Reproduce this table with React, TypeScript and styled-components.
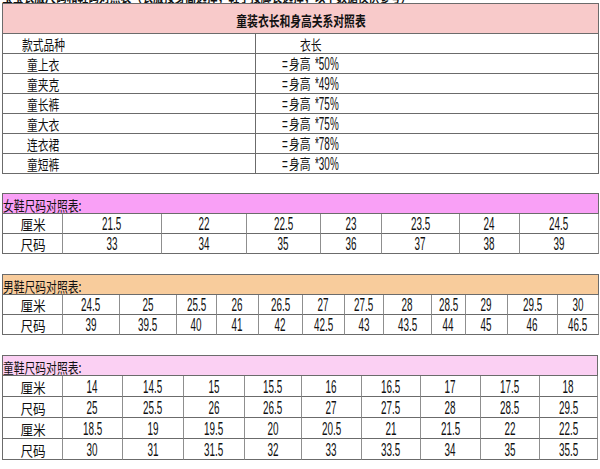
import { Fragment } from "react";
import styled, { createGlobalStyle } from "styled-components";

const GlobalStyle = createGlobalStyle`
  *, *::before, *::after { box-sizing: border-box; }
  html, body { margin: 0; padding: 0; background: #ffffff; }
  body {
    font-family: "Liberation Sans", "Noto Sans CJK SC", sans-serif;
    color: #111111;
  }
`;

const Page = styled.div`
  width: 600px;
  padding-left: 2px;
`;

// the line above the first table is cut off by the top of the screenshot
const CutLine = styled.div`
  height: 3px;
  overflow: hidden;
  display: flex;
  align-items: flex-end;
`;

const Grid = styled.div<{ $cols: number[]; $head: number; $row: number; $top: number }>`
  display: grid;
  width: fit-content;
  grid-template-columns: ${({ $cols }) => $cols.map((c) => `${c}px`).join(" ")};
  grid-template-rows: ${({ $head }) => $head}px;
  grid-auto-rows: ${({ $row }) => $row}px;
  margin-top: ${({ $top }) => $top}px;
  border-top: 1px solid #6b6b6b;
  border-left: 1px solid #6b6b6b;
`;

const TitleBar = styled.div<{ $bg: string; $center?: boolean }>`
  grid-column: 1 / -1;
  display: flex;
  align-items: center;
  justify-content: ${({ $center }) => ($center ? "center" : "flex-start")};
  padding-top: 2px;
  background: ${({ $bg }) => $bg};
  border-right: 1px solid #6b6b6b;
  border-bottom: 1px solid #6b6b6b;
  white-space: nowrap;
`;

const Cell = styled.div<{ $pad?: number; $left?: boolean; $line?: string }>`
  display: flex;
  align-items: center;
  justify-content: ${({ $left }) => ($left ? "flex-start" : "center")};
  padding-left: ${({ $pad = 0 }) => $pad}px;
  padding-top: 1px;
  border-right: 1px solid ${({ $line = "#8f8f8f" }) => $line};
  border-bottom: 1px solid #6b6b6b;
  white-space: nowrap;
`;

const Han = styled.span<{ $left?: boolean; $bold?: boolean; $wide?: boolean }>`
  display: inline-block;
  font-family: "Noto Sans CJK SC", "Liberation Sans", sans-serif;
  font-size: 14px;
  line-height: 14px;
  font-weight: ${({ $bold }) => ($bold ? 700 : 400)};
  white-space: nowrap;
  transform: scaleX(${({ $wide }) => ($wide ? 0.9 : 0.77)});
  transform-origin: ${({ $left }) => ($left ? "left" : "center")} center;
`;

const Num = styled.span<{ $left?: boolean }>`
  display: inline-block;
  font-family: "Liberation Sans", sans-serif;
  font-size: 18px;
  line-height: 18px;
  white-space: nowrap;
  transform: scaleX(0.55);
  transform-origin: ${({ $left }) => ($left ? "left" : "center")} center;
`;

const Slot = styled.span<{ $w: number }>`
  display: inline-block;
  width: ${({ $w }) => $w}px;
  white-space: nowrap;
`;

const garments: [string, string][] = [
  ["童上衣", "50"],
  ["童夹克", "49"],
  ["童长裤", "75"],
  ["童大衣", "75"],
  ["连衣裙", "78"],
  ["童短裤", "30"],
];

interface ShoeTable {
  title: string;
  bg: string;
  cols: number[];
  row: number;
  rows: [string, string[]][];
}

const shoes: ShoeTable[] = [
  {
    title: "女鞋尺码对照表:",
    bg: "#f9a0f6",
    cols: [60, 99, 85, 74, 61, 78, 60, 79],
    row: 20,
    rows: [
      ["厘米", ["21.5", "22", "22.5", "23", "23.5", "24", "24.5"]],
      ["尺码", ["33", "34", "35", "36", "37", "38", "39"]],
    ],
  },
  {
    title: "男鞋尺码对照表:",
    bg: "#f8cc9c",
    cols: [60, 57, 57, 40, 42, 44, 42, 39, 48, 34, 42, 50, 41],
    row: 20,
    rows: [
      ["厘米", ["24.5", "25", "25.5", "26", "26.5", "27", "27.5", "28", "28.5", "29", "29.5", "30"]],
      ["尺码", ["39", "39.5", "40", "41", "42", "42.5", "43", "43.5", "44", "45", "46", "46.5"]],
    ],
  },
  {
    title: "童鞋尺码对照表:",
    bg: "#fbd0f3",
    cols: [60, 60, 61, 61, 57, 60, 59, 60, 59, 58],
    row: 21,
    rows: [
      ["厘米", ["14", "14.5", "15", "15.5", "16", "16.5", "17", "17.5", "18"]],
      ["尺码", ["25", "25.5", "26", "26.5", "27", "27.5", "28", "28.5", "29.5"]],
      ["厘米", ["18.5", "19", "19.5", "20", "20.5", "21", "21.5", "22", "22.5"]],
      ["尺码", ["30", "31", "31.5", "32", "33", "33.5", "34", "35", "35.5"]],
    ],
  },
];

export default function App() {
  return (
    <>
      <GlobalStyle />
      <Page>
        <CutLine>
          <Han $left $bold>
            宝宝衣服尺码和鞋码对照表（衣服按身高选择，鞋子按脚长选择，以下数据仅供参考）
          </Han>
        </CutLine>

        <Grid $cols={[253, 343]} $head={30} $row={20} $top={0}>
          <TitleBar $bg="#f8caca" $center>
            <Han $bold>童装衣长和身高关系对照表</Han>
          </TitleBar>
          <Cell $left $pad={19} $line="#6b6b6b">
            <Han $left>款式品种</Han>
          </Cell>
          <Cell $left $pad={44} $line="#6b6b6b">
            <Han $left>衣长</Han>
          </Cell>
          {garments.map(([name, pct]) => (
            <Fragment key={name + pct}>
              <Cell $left $pad={24} $line="#6b6b6b">
                <Han $left>{name}</Han>
              </Cell>
              <Cell $left $pad={26} $line="#6b6b6b">
                <Slot $w={7}>
                  <Num $left>=</Num>
                </Slot>
                <Slot $w={26}>
                  <Han $left>身高</Han>
                </Slot>
                <Num $left>*{pct}%</Num>
              </Cell>
            </Fragment>
          ))}
        </Grid>

        {shoes.map((t, i) => (
          <Grid key={t.title} $cols={t.cols} $head={20} $row={t.row} $top={i === 0 ? 19 : 20}>
            <TitleBar $bg={t.bg}>
              <Han $left>{t.title}</Han>
            </TitleBar>
            {t.rows.map(([label, values], r) => (
              <Fragment key={r}>
                <Cell>
                  <Han $wide>{label}</Han>
                </Cell>
                {values.map((v, c) => (
                  <Cell key={c}>
                    <Num>{v}</Num>
                  </Cell>
                ))}
              </Fragment>
            ))}
          </Grid>
        ))}
      </Page>
    </>
  );
}
